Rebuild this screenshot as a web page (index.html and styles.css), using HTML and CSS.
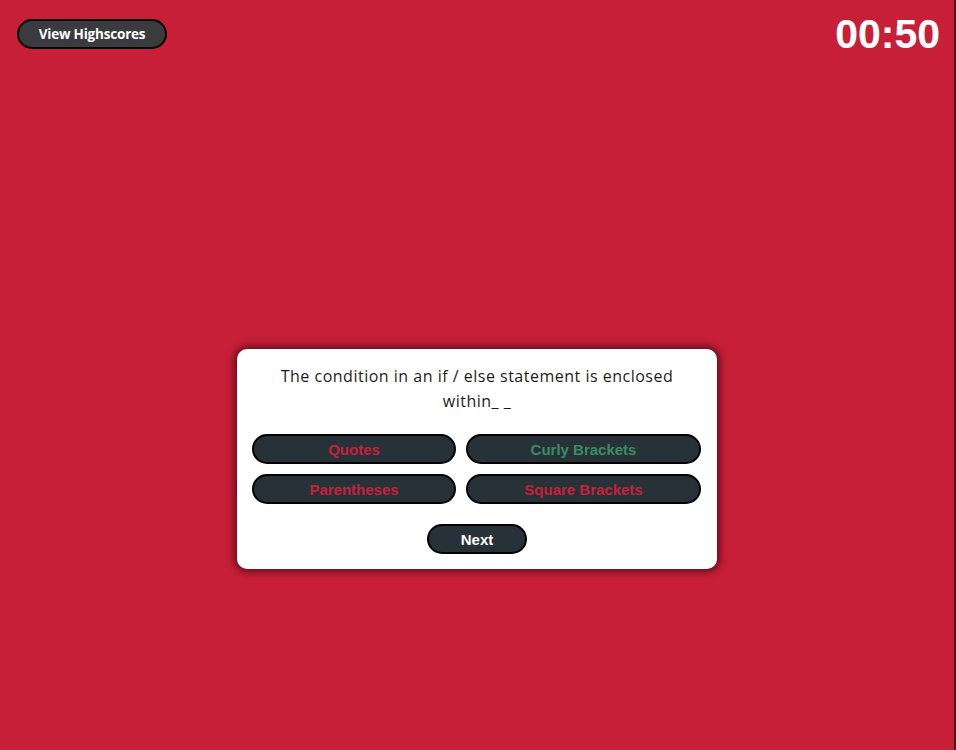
FILE: index.html
```html
<!DOCTYPE html>
<html lang="en">
<head>
<meta charset="utf-8">
<title>Code Quiz</title>
<link rel="stylesheet" href="styles.css">
</head>
<body>
<div class="page">
  <header class="topbar">
    <button class="highscores-btn">View Highscores</button>
    <div class="timer">00:50</div>
  </header>
  <main class="quiz-card">
    <p class="question">The condition in an if / else statement is enclosed within_&nbsp;_</p>
    <div class="answers">
      <button class="answer wrong">Quotes</button>
      <button class="answer right">Curly Brackets</button>
      <button class="answer wrong">Parentheses</button>
      <button class="answer wrong">Square Brackets</button>
    </div>
    <div class="actions">
      <button class="next-btn">Next</button>
    </div>
  </main>
</div>
</body>
</html>
```
FILE: styles.css
```css
* { box-sizing: border-box; }
html, body {
  margin: 0;
  height: 100%;
}
body {
  background: #c71f38;
  font-family: "Open Sans", "DejaVu Sans", sans-serif;
}
.page {
  height: 750px;
  width: 956px;
  border-right: 2px solid #5e0f1d;
  overflow: hidden;
}
.topbar {
  display: flex;
  justify-content: space-between;
  align-items: flex-start;
  padding: 11px 14px 0 17px;
}
.highscores-btn {
  margin-top: 8px;
  width: 150px;
  height: 30px;
  border: 2px solid #000;
  border-radius: 15px;
  background: #393b3e;
  color: #fff;
  font-family: "Open Sans", sans-serif;
  font-weight: 700;
  font-size: 13.5px;
  letter-spacing: -0.2px;
  padding: 0;
  cursor: pointer;
}
.timer {
  color: #fff;
  font-family: "Liberation Sans", Arial, sans-serif;
  font-weight: 700;
  font-size: 41px;
  line-height: 46px;
}
.quiz-card {
  width: 480px;
  margin: 292px auto 0;
  background: #fff;
  border-radius: 10px;
  box-shadow: 0 0 9px 2px rgba(40, 0, 8, 0.75);
  padding: 15px;
}
.question {
  margin: 0;
  text-align: center;
  color: #1c1c1c;
  font-size: 16px;
  line-height: 25px;
  letter-spacing: 0.5px;
  padding: 0 12px;
}
.answers {
  display: grid;
  grid-template-columns: 204px 235px;
  gap: 10px;
  margin-top: 20px;
}
.answer,
.next-btn {
  height: 30px;
  border: 2px solid #000;
  border-radius: 15px;
  background: #263238;
  font-family: "Liberation Sans", Arial, sans-serif;
  font-weight: 700;
  font-size: 15px;
  padding: 0;
  cursor: pointer;
}
.answer.wrong { color: #c8203b; }
.answer.right { color: #3b8d5f; }
.actions {
  display: flex;
  justify-content: center;
  margin-top: 20px;
}
.next-btn {
  width: 100px;
  color: #fff;
}
```
